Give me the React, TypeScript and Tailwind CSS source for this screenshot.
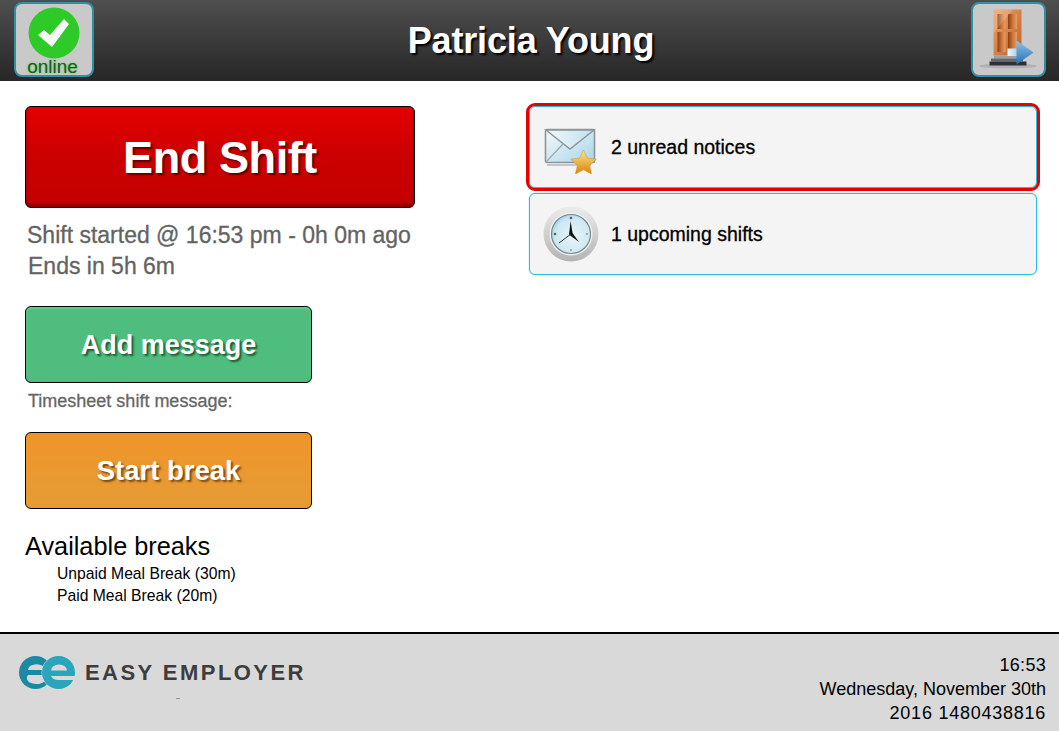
import React from 'react';

const font = "font-['Liberation_Sans',Arial,sans-serif]";

const OnlineIcon = () => (
  <svg width="52" height="52" viewBox="0 0 52 52" className="blur-[0.3px]">
    <circle cx="26" cy="26" r="25.5" fill="#2ecb28" />
    <path d="M10 28l6-5 6 5L36 12l5 5-17 23z" fill="#f6f8f6" />
  </svg>
);

const DoorIcon = () => (
  <svg width="66" height="66" viewBox="0 0 66 66" className="blur-[0.3px]">
    <defs>
      <linearGradient id="doorFrame" x1="0" y1="0" x2="1" y2="1">
        <stop offset="0" stopColor="#eea26a" />
        <stop offset="1" stopColor="#b9622a" />
      </linearGradient>
      <linearGradient id="doorPanel" x1="0" y1="0" x2="1" y2="0">
        <stop offset="0" stopColor="#8a3f10" />
        <stop offset="0.55" stopColor="#cf7a3c" />
        <stop offset="1" stopColor="#eb9c62" />
      </linearGradient>
      <linearGradient id="arrowHead" x1="0" y1="0" x2="0" y2="1">
        <stop offset="0" stopColor="#8cc4ea" />
        <stop offset="1" stopColor="#2472b4" />
      </linearGradient>
      <linearGradient id="arrowShaft" x1="0" y1="0" x2="1" y2="0">
        <stop offset="0" stopColor="#f0f6fa" />
        <stop offset="1" stopColor="#a9cfe9" />
      </linearGradient>
    </defs>
    <ellipse cx="33" cy="59" rx="29" ry="2.5" fill="#a8a8a8" opacity="0.7" />
    <rect x="18.5" y="2.5" width="28" height="46" fill="url(#doorFrame)" />
    <rect x="22.5" y="7" width="8" height="15" fill="url(#doorPanel)" />
    <rect x="33" y="7" width="9" height="15" fill="url(#doorPanel)" />
    <rect x="22.5" y="25" width="8" height="20" fill="url(#doorPanel)" />
    <rect x="33" y="25" width="9" height="20" fill="url(#doorPanel)" />
    <path d="M18.5 2.5H38L18.5 26z" fill="#fff" opacity="0.18" />
    <rect x="19" y="48.5" width="26" height="3" fill="#9aa0a4" />
    <rect x="16" y="51.5" width="32" height="3" fill="#63686c" />
    <rect x="14.5" y="54.5" width="37" height="4" fill="#2e3235" />
    <rect x="32.5" y="41.5" width="10" height="7.5" fill="url(#arrowShaft)" />
    <path d="M41.5 33.5l17 12-17 12z" fill="url(#arrowHead)" />
  </svg>
);

const MailIcon = () => (
  <svg width="56" height="54" viewBox="0 0 56 54" className="blur-[0.4px]">
    <defs>
      <linearGradient id="mailBody" x1="0" y1="0" x2="1" y2="1">
        <stop offset="0" stopColor="#f6fafb" />
        <stop offset="1" stopColor="#a7d4e8" />
      </linearGradient>
      <linearGradient id="mailFlap" x1="0" y1="0" x2="1" y2="0">
        <stop offset="0" stopColor="#f2f8fb" />
        <stop offset="1" stopColor="#bfe0ef" />
      </linearGradient>
      <linearGradient id="starFill" x1="0" y1="0" x2="0" y2="1">
        <stop offset="0" stopColor="#fde68f" />
        <stop offset="1" stopColor="#d98408" />
      </linearGradient>
    </defs>
    <rect x="2.5" y="9.5" width="49" height="33" rx="1.5" fill="url(#mailBody)" stroke="#8d9498" strokeWidth="1.6" />
    <path d="M3 10l24 19L51 10z" fill="url(#mailFlap)" stroke="#8d9498" strokeWidth="1.4" />
    <path d="M3 42l17-18" stroke="#9fa8ad" strokeWidth="1.2" fill="none" />
    <path d="M4 45h44" stroke="#c4c6c8" strokeWidth="2" />
    <path d="M40.5 30l3.9 8 8.9 1.2-6.5 6.1 1.7 8.7-8-4.3-8 4.3 1.7-8.7-6.5-6.1 8.9-1.2z" fill="url(#starFill)" stroke="#d0952a" strokeWidth="0.5" />
  </svg>
);

const ClockIcon = () => (
  <svg width="56" height="56" viewBox="0 0 56 56" className="blur-[0.3px]">
    <defs>
      <linearGradient id="clockRim" x1="0" y1="0" x2="0" y2="1">
        <stop offset="0" stopColor="#ececec" />
        <stop offset="1" stopColor="#b4b4b4" />
      </linearGradient>
      <radialGradient id="clockFace" cx="0.55" cy="0.55" r="0.65">
        <stop offset="0" stopColor="#e8f5fa" />
        <stop offset="0.7" stopColor="#cde8f3" />
        <stop offset="1" stopColor="#7fc4e0" />
      </radialGradient>
    </defs>
    <circle cx="28" cy="28" r="27.5" fill="url(#clockRim)" />
    <circle cx="28" cy="28" r="21.5" fill="#f2f2f2" />
    <circle cx="28" cy="28" r="19.5" fill="url(#clockFace)" stroke="#7a868c" strokeWidth="1.2" />
    <path d="M26 29l1.6-14 2.2 14z" fill="#111" />
    <path d="M26.5 29l2.6-2.6 6.9 9.6z" fill="#111" />
    <path d="M28 28L16 37" stroke="#333" strokeWidth="1" />
    <circle cx="28" cy="12" r="1.3" fill="#5a6468" />
    <circle cx="44" cy="28" r="1" fill="#8a9498" />
    <circle cx="28" cy="44" r="1" fill="#8a9498" />
    <circle cx="12" cy="28" r="1.3" fill="#5a6468" />
  </svg>
);

const LogoMark = () => (
  <svg width="56" height="33" viewBox="0 0 56 33" className="blur-[0.2px]">
    <circle cx="16.5" cy="16.5" r="16.5" fill="#1a8aa4" />
    <path d="M9 14a8 5.5 0 0 1 17 0z" fill="#d9d9d9" />
    <path d="M9 19h17v6a8 5 0 0 1-17-6z" fill="#d9d9d9" />
    <circle cx="39.5" cy="16.5" r="17" fill="#d9d9d9" />
    <circle cx="39.5" cy="16.5" r="16.5" fill="#2aa5ba" />
    <path d="M32 14.5a8 6 0 0 1 16 0z" fill="#d9d9d9" />
    <path d="M32 20h24v4H40a8 6 0 0 1-8-4z" fill="#d9d9d9" />
  </svg>
);

const NoticeRow = ({ icon, label, alert }: { icon: React.ReactNode; label: string; alert?: boolean }) => (
  <div
    className={`flex items-center h-[82px] rounded-md bg-[#f4f4f4] border-[1.5px] border-[#28bcdc] pl-[13px] ${
      alert ? 'outline-[3.5px] outline-[#e60000]' : 'shadow-[0_0_2px_#9fe3f2]'
    }`}
  >
    <div className="w-[56px] flex justify-center shrink-0">{icon}</div>
    <span className="ml-[12px] mt-[2px] text-[19.5px] text-black [-webkit-text-stroke:0.3px_#000]">{label}</span>
  </div>
);

export default function App() {
  return (
    <div className={`${font} w-[1059px] h-[731px] flex flex-col bg-white overflow-hidden`}>
      {/* Header */}
      <div className="h-[81px] shrink-0 flex items-start justify-between pl-[14px] pr-[13px] pt-[2px] bg-gradient-to-b from-[#4f4f4f] to-[#272727]">
        <div className="w-[80px] h-[75px] rounded-lg bg-[#c9c9c9] border-2 border-[#2f8fa3] flex flex-col items-center">
          <div className="mt-[3px] h-[52px]">
            <OnlineIcon />
          </div>
          <span className="-ml-[3px] text-[19px] leading-[15px] text-[#1c5c1c] [text-shadow:0_0_2px_#3fd03f]">online</span>
        </div>
        <h1 className="mt-[15px] mr-[3px] text-[36px] tracking-[-0.15px] leading-[48px] font-bold text-white [text-shadow:2px_2px_2px_#000]">
          Patricia Young
        </h1>
        <div className="w-[75px] h-[75px] rounded-lg bg-[#c9c9c9] border-2 border-[#2f8fa3] flex items-center justify-center">
          <DoorIcon />
        </div>
      </div>

      {/* Main */}
      <div className="flex-1 flex pl-[25px] pr-[22px]">
        <div className="w-[504px] shrink-0 flex flex-col items-start pt-[25px]">
          <div className="w-[390px] h-[102px] rounded-md border border-black flex items-center justify-center bg-gradient-to-b from-[#e40000] via-[#cb0000] to-[#c40000] shadow-[inset_0_-3px_3px_#8a0000]">
            <span className="text-[45px] tracking-[-0.4px] mt-[2px] font-bold text-white [text-shadow:2px_2px_2px_#5a0000]">End Shift</span>
          </div>
          <p className="mt-[11px] ml-[2px] text-[23px] leading-[32px] text-[#636363] [-webkit-text-stroke:0.3px_#636363]">Shift started @ 16:53 pm - 0h 0m ago</p>
          <p className="ml-[3px] text-[23px] leading-[31px] text-[#636363] [-webkit-text-stroke:0.3px_#636363]">Ends in 5h 6m</p>
          <div className="mt-[24px] w-[287px] h-[77px] rounded-md border border-black flex items-center justify-center bg-[#4fbd7d] shadow-[inset_0_2px_2px_#6ccb93]">
            <span className="mt-[2px] text-[27px] font-bold text-white [text-shadow:2px_2px_2px_#1d5a36]">Add message</span>
          </div>
          <p className="mt-[6px] ml-[3px] text-[18px] leading-[24px] text-[#666] [-webkit-text-stroke:0.3px_#666]">Timesheet shift message:</p>
          <div className="mt-[19px] w-[287px] h-[77px] rounded-md border border-black flex items-center justify-center bg-gradient-to-b from-[#f09429] to-[#e69c35]">
            <span className="text-[27.5px] font-bold text-white [text-shadow:2px_2px_2px_#7a4a10]">Start break</span>
          </div>
          <h2 className="mt-[22px] text-[25.3px] leading-[30px] text-black">Available breaks</h2>
          <ul className="ml-[32px] mt-[2px] text-[15.7px] leading-[22px] text-black">
            <li>Unpaid Meal Break (30m)</li>
            <li>Paid Meal Break (20m)</li>
          </ul>
        </div>
        <div className="flex-1 flex flex-col gap-[5px] pt-[25px]">
          <NoticeRow icon={<MailIcon />} label="2 unread notices" alert />
          <NoticeRow icon={<ClockIcon />} label="1 upcoming shifts" />
        </div>
      </div>

      {/* Footer */}
      <div className="h-[99px] shrink-0 border-t-2 border-black bg-[#d9d9d9] flex justify-between pl-[19px] pr-[13px]">
        <div className="flex flex-col items-start pt-[22px]">
          <div className="flex items-center">
            <LogoMark />
            <span className="ml-[10px] text-[22px] leading-[30px] font-bold tracking-[2.45px] text-[#3d3d3d]">EASY EMPLOYER</span>
          </div>
          <div className="ml-[157px] mt-[9px] w-[4px] h-px bg-[#999]" />
        </div>
        <div className="pt-[19px] text-right text-[18px] leading-[24px] text-black">
          <div className="tracking-[0.3px]">16:53</div>
          <div>Wednesday, November 30th</div>
          <div className="tracking-[0.75px]">2016 1480438816</div>
        </div>
      </div>
    </div>
  );
}
